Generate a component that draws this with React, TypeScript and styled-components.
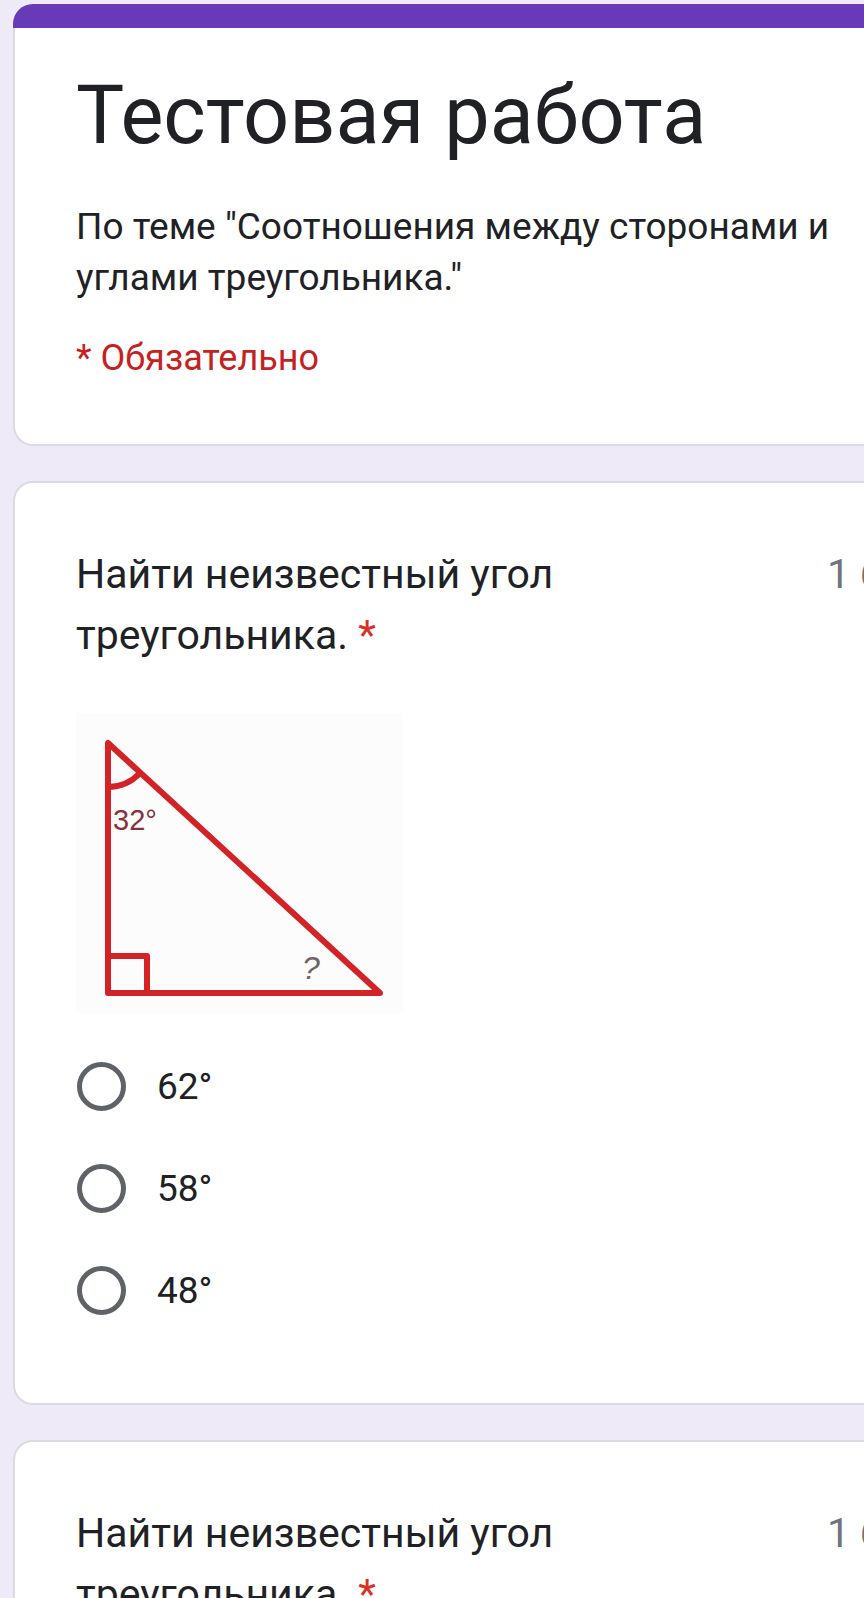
import React from "react";
import styled, { createGlobalStyle } from "styled-components";

const GlobalStyle = createGlobalStyle`
  html, body {
    margin: 0;
    padding: 0;
    background: #efeaf8;
    overflow: hidden;
  }
  body {
    font-family: Roboto, "Noto Sans", Arial, sans-serif;
    color: #202124;
  }
`;

type Option = { id: string; label: string };

const options: Option[] = [
  { id: "a", label: "62°" },
  { id: "b", label: "58°" },
  { id: "c", label: "48°" },
];

const Triangle: React.FC = () => (
  <svg width="326" height="300" viewBox="0 0 326 300">
    <rect x="0" y="0" width="326" height="300" fill="#fdfcfc" />
    <g stroke="#d42326" strokeWidth="6" fill="none" strokeLinejoin="round">
      <path d="M32 30 L32 280 L304 280 Z" />
      <path d="M32 243 L71 243 L71 280" />
      <path d="M32 74 A44 44 0 0 0 64 60" />
    </g>
    <text
      x="37"
      y="117"
      fontFamily="Liberation Sans, Arial, sans-serif"
      fontSize="29"
      fill="#853338"
    >
      32°
    </text>
    <text
      x="226"
      y="266"
      fontFamily="Liberation Sans, Arial, sans-serif"
      fontSize="32"
      fontStyle="italic"
      fill="#6f6363"
    >
      ?
    </text>
  </svg>
);

const QuestionCard: React.FC<{ withBody?: boolean }> = ({ withBody }) => (
  <Card>
    <QuestionHeader>
      <QuestionTitle>
        Найти неизвестный угол треугольника. <Star>*</Star>
      </QuestionTitle>
      <Points>1 балл</Points>
    </QuestionHeader>
    {withBody && (
      <>
        <ImageBox>
          <Triangle />
        </ImageBox>
        <OptionList>
          {options.map((o) => (
            <OptionRow key={o.id}>
              <Radio />
              <OptionLabel>{o.label}</OptionLabel>
            </OptionRow>
          ))}
        </OptionList>
      </>
    )}
  </Card>
);

const App: React.FC = () => {
  return (
    <>
      <GlobalStyle />
      <Page>
        <HeaderCard>
          <AccentBar />
          <HeaderBody>
            <FormTitle>Тестовая работа</FormTitle>
            <FormDescription>
              По теме "Соотношения между сторонами и углами треугольника."
            </FormDescription>
            <Required>* Обязательно</Required>
          </HeaderBody>
        </HeaderCard>
        <QuestionCard withBody />
        <QuestionCard />
      </Page>
    </>
  );
};

export default App;

const Page = styled.div`
  display: flex;
  flex-direction: column;
  gap: 35px;
  padding: 4px 0 0 13px;
  width: 900px;
`;

const HeaderCard = styled.section`
  width: 886px;
  display: flex;
  flex-direction: column;
`;

const AccentBar = styled.div`
  height: 24px;
  background: #673ab7;
  border-radius: 20px 20px 0 0;
`;

const HeaderBody = styled.div`
  background: #fff;
  border: 2px solid #dcdae0;
  border-top: none;
  border-radius: 0 0 20px 20px;
  padding: 40px 50px 61px 61px;
`;

const FormTitle = styled.h1`
  margin: 0;
  font-family: Roboto, Arial, sans-serif;
  font-weight: 400;
  font-size: 81px;
  line-height: 96px;
  color: #202124;
`;

const FormDescription = styled.p`
  margin: 37px 0 0;
  width: 772px;
  font-size: 37px;
  line-height: 51px;
  color: #202124;
`;

const Required = styled.div`
  margin-top: 30px;
  font-size: 36px;
  line-height: 50px;
  color: #c5221f;
`;

const Card = styled.section`
  width: 886px;
  box-sizing: border-box;
  background: #fff;
  border: 2px solid #dcdae0;
  border-radius: 20px;
  padding: 61px 40px 62px 61px;
`;

const QuestionHeader = styled.div`
  display: grid;
  grid-template-columns: 751px auto;
  align-items: start;
`;

const QuestionTitle = styled.div`
  padding-right: 150px;
  font-size: 41px;
  line-height: 61px;
  color: #202124;
`;

const Star = styled.span`
  color: #d93025;
`;

const Points = styled.div`
  font-size: 41px;
  line-height: 61px;
  color: #70757a;
  white-space: nowrap;
`;

const ImageBox = styled.div`
  margin-top: 47px;
  display: flex;
`;

const OptionList = styled.div`
  margin-top: 22px;
  display: flex;
  flex-direction: column;
`;

const OptionRow = styled.label`
  display: flex;
  align-items: center;
  height: 102px;
`;

const Radio = styled.span`
  box-sizing: border-box;
  width: 49px;
  height: 49px;
  border: 5px solid #5f6368;
  border-radius: 50%;
  margin-left: 1px;
`;

const OptionLabel = styled.span`
  margin-left: 31px;
  font-size: 37px;
  color: #202124;
`;
